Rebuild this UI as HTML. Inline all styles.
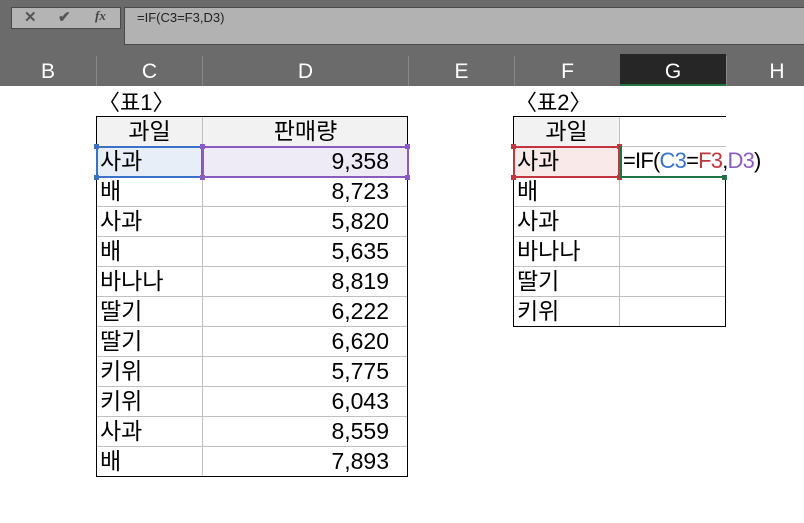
<!DOCTYPE html>
<html><head><meta charset="utf-8"><style>
body{margin:0;width:804px;height:523px;overflow:hidden;background:#fff;position:relative;font-family:"Liberation Sans","Noto Sans CJK KR","NanumGothic",sans-serif;}
.a{position:absolute;box-sizing:border-box;}
.t{position:absolute;font-size:23px;line-height:30px;height:30px;white-space:nowrap;color:#000;}
.h{position:absolute;top:54px;height:32px;line-height:36px;color:#fff;font-size:21px;text-align:center;}
.hl{position:absolute;left:0;height:1px;background:#c0c0c0;}
.sq{position:absolute;width:5px;height:5px;}
</style></head><body>
<div class="a" style="left:0;top:0;width:804px;height:86px;background:#6b6b6b"></div>
<div class="a" style="left:11px;top:7px;width:110px;height:22px;background:#b4b4b4;border:1px solid #4a4a4a"></div>
<div class="a" style="left:24px;top:8px;color:#555;font-size:15px;font-weight:bold">✕</div>
<div class="a" style="left:58px;top:8px;color:#555;font-size:15px;font-weight:bold">✔</div>
<div class="a" style="left:95px;top:8px;color:#444;font-size:13px;font-style:italic;font-family:'Liberation Serif',serif;font-weight:bold">fx</div>
<div class="a" style="left:124px;top:7px;width:680px;height:38px;background:#b2b2b2;border:1px solid #4a4a4a;border-right:none"></div>
<div class="a" style="left:137px;top:10px;font-size:13px;color:#222">=IF(C3=F3,D3)</div>
<div class="a" style="left:620px;top:54px;width:106px;height:32px;background:#262626;border-bottom:2px solid #217346"></div>
<div class="a" style="left:96px;top:56px;width:1px;height:30px;background:#888"></div>
<div class="a" style="left:202px;top:56px;width:1px;height:30px;background:#888"></div>
<div class="a" style="left:408px;top:56px;width:1px;height:30px;background:#888"></div>
<div class="a" style="left:514px;top:56px;width:1px;height:30px;background:#888"></div>
<div class="a" style="left:726px;top:56px;width:1px;height:30px;background:#888"></div>
<div class="h" style="left:0;width:96px">B</div>
<div class="h" style="left:97px;width:105px">C</div>
<div class="h" style="left:203px;width:205px">D</div>
<div class="h" style="left:409px;width:105px">E</div>
<div class="h" style="left:515px;width:105px">F</div>
<div class="h" style="left:620px;width:106px">G</div>
<div class="h" style="left:727px;width:100px">H</div>

<div class="t" style="left:98px;top:88px;font-size:22px">〈표1〉</div>
<div class="t" style="left:515px;top:88px;font-size:22px">〈표2〉</div>

<!-- table 1 -->
<div class="a" style="left:96px;top:116px;width:312px;height:361px;border:1px solid #000">
<div class="a" style="left:0;top:0;width:310px;height:30px;background:#f2f2f2"></div>
<div class="a" style="left:105px;top:0;width:1px;height:359px;background:#c0c0c0"></div>
<div class="hl" style="top:29px;width:310px"></div><div class="hl" style="top:59px;width:310px"></div><div class="hl" style="top:89px;width:310px"></div><div class="hl" style="top:119px;width:310px"></div><div class="hl" style="top:149px;width:310px"></div><div class="hl" style="top:179px;width:310px"></div><div class="hl" style="top:209px;width:310px"></div><div class="hl" style="top:239px;width:310px"></div><div class="hl" style="top:269px;width:310px"></div><div class="hl" style="top:299px;width:310px"></div><div class="hl" style="top:329px;width:310px"></div>
</div>
<div class="a" style="left:96px;top:146px;width:107px;height:32px;background:#e8eef8;border:2px solid #3a72c8"></div>
<div class="a" style="left:202px;top:146px;width:207px;height:32px;background:#efebf6;border:2px solid #8a5cc0"></div>
<div class="sq" style="left:94px;top:144px;background:#3a72c8"></div><div class="sq" style="left:94px;top:175px;background:#3a72c8"></div>
<div class="sq" style="left:200px;top:144px;background:#8a5cc0"></div><div class="sq" style="left:200px;top:175px;background:#8a5cc0"></div>
<div class="sq" style="left:405px;top:144px;background:#8a5cc0"></div><div class="sq" style="left:405px;top:175px;background:#8a5cc0"></div>
<div class="t" style="left:97px;top:116px;width:105px;text-align:center">과일</div>
<div class="t" style="left:203px;top:116px;width:205px;text-align:center">판매량</div>
<div class="t" style="left:100px;top:146px">사과</div><div class="t" style="left:203px;top:146px;width:186px;text-align:right">9,358</div>
<div class="t" style="left:100px;top:176px">배</div><div class="t" style="left:203px;top:176px;width:186px;text-align:right">8,723</div>
<div class="t" style="left:100px;top:206px">사과</div><div class="t" style="left:203px;top:206px;width:186px;text-align:right">5,820</div>
<div class="t" style="left:100px;top:236px">배</div><div class="t" style="left:203px;top:236px;width:186px;text-align:right">5,635</div>
<div class="t" style="left:100px;top:266px">바나나</div><div class="t" style="left:203px;top:266px;width:186px;text-align:right">8,819</div>
<div class="t" style="left:100px;top:296px">딸기</div><div class="t" style="left:203px;top:296px;width:186px;text-align:right">6,222</div>
<div class="t" style="left:100px;top:326px">딸기</div><div class="t" style="left:203px;top:326px;width:186px;text-align:right">6,620</div>
<div class="t" style="left:100px;top:356px">키위</div><div class="t" style="left:203px;top:356px;width:186px;text-align:right">5,775</div>
<div class="t" style="left:100px;top:386px">키위</div><div class="t" style="left:203px;top:386px;width:186px;text-align:right">6,043</div>
<div class="t" style="left:100px;top:416px">사과</div><div class="t" style="left:203px;top:416px;width:186px;text-align:right">8,559</div>
<div class="t" style="left:100px;top:446px">배</div><div class="t" style="left:203px;top:446px;width:186px;text-align:right">7,893</div>

<!-- table 2 -->
<div class="a" style="left:513px;top:116px;width:213px;height:211px;border:1px solid #000;border-right:none">
<div class="a" style="left:0;top:0;width:106px;height:30px;background:#f2f2f2"></div>
<div class="a" style="left:105px;top:0;width:1px;height:209px;background:#c0c0c0"></div>
<div class="hl" style="top:29px;width:212px"></div><div class="hl" style="top:59px;width:212px"></div><div class="hl" style="top:89px;width:212px"></div><div class="hl" style="top:119px;width:212px"></div><div class="hl" style="top:149px;width:212px"></div><div class="hl" style="top:179px;width:212px"></div>
</div>
<div class="a" style="left:725px;top:176px;width:1px;height:151px;background:#000"></div>
<div class="a" style="left:513px;top:146px;width:107px;height:32px;background:#f9e9e9;border:2px solid #c0353e"></div>
<div class="sq" style="left:511px;top:144px;background:#c0353e"></div><div class="sq" style="left:511px;top:175px;background:#c0353e"></div>
<div class="sq" style="left:617px;top:144px;background:#c0353e"></div><div class="sq" style="left:617px;top:175px;background:#c0353e"></div>
<div class="a" style="left:620px;top:146px;width:2px;height:32px;background:#217346"></div>
<div class="a" style="left:622px;top:176px;width:104px;height:2px;background:#217346"></div>
<div class="sq" style="left:722px;top:175px;background:#217346"></div>
<div class="t" style="left:514px;top:116px;width:105px;text-align:center">과일</div>
<div class="t" style="left:517px;top:146px">사과</div>
<div class="t" style="left:623px;top:146px;font-size:22px;letter-spacing:-0.8px">=IF(<span style="color:#3a72c8">C3</span>=<span style="color:#c0353e">F3</span>,<span style="color:#8a5cc0">D3</span>)</div>
<div class="t" style="left:517px;top:176px">배</div>
<div class="t" style="left:517px;top:206px">사과</div>
<div class="t" style="left:517px;top:236px">바나나</div>
<div class="t" style="left:517px;top:266px">딸기</div>
<div class="t" style="left:517px;top:296px">키위</div>
</body></html>
